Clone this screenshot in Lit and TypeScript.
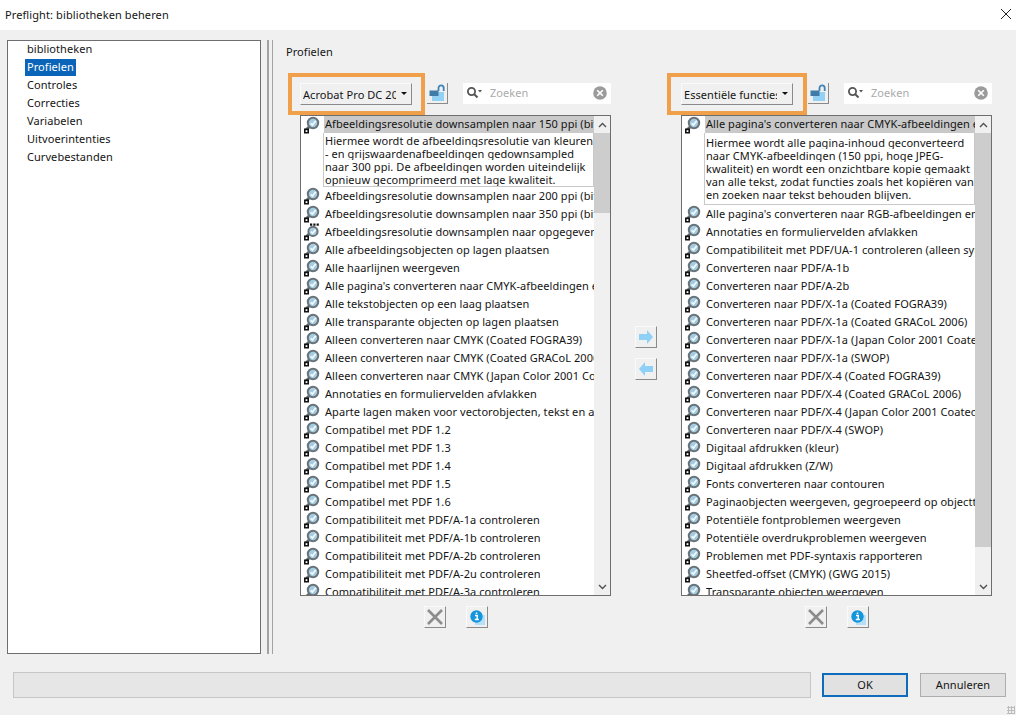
import { LitElement, html, css, svg } from "lit";
import { customElement, property } from "lit/decorators.js";

const leftRows = [
  "Afbeeldingsresolutie downsamplen naar 200 ppi (bitmap)",
  "Afbeeldingsresolutie downsamplen naar 350 ppi (bitmap)",
  "Afbeeldingsresolutie downsamplen naar opgegeven resolutie",
  "Alle afbeeldingsobjecten op lagen plaatsen",
  "Alle haarlijnen weergeven",
  "Alle pagina's converteren naar CMYK-afbeeldingen en tekst",
  "Alle tekstobjecten op een laag plaatsen",
  "Alle transparante objecten op lagen plaatsen",
  "Alleen converteren naar CMYK (Coated FOGRA39)",
  "Alleen converteren naar CMYK (Coated GRACoL 2006)",
  "Alleen converteren naar CMYK (Japan Color 2001 Coated)",
  "Annotaties en formuliervelden afvlakken",
  "Aparte lagen maken voor vectorobjecten, tekst en afbeeldingen",
  "Compatibel met PDF 1.2",
  "Compatibel met PDF 1.3",
  "Compatibel met PDF 1.4",
  "Compatibel met PDF 1.5",
  "Compatibel met PDF 1.6",
  "Compatibiliteit met PDF/A-1a controleren",
  "Compatibiliteit met PDF/A-1b controleren",
  "Compatibiliteit met PDF/A-2b controleren",
  "Compatibiliteit met PDF/A-2u controleren",
  "Compatibiliteit met PDF/A-3a controleren",
];

const rightRows = [
  "Alle pagina's converteren naar RGB-afbeeldingen en tekst",
  "Annotaties en formuliervelden afvlakken",
  "Compatibiliteit met PDF/UA-1 controleren (alleen syntaxis)",
  "Converteren naar PDF/A-1b",
  "Converteren naar PDF/A-2b",
  "Converteren naar PDF/X-1a (Coated FOGRA39)",
  "Converteren naar PDF/X-1a (Coated GRACoL 2006)",
  "Converteren naar PDF/X-1a (Japan Color 2001 Coated)",
  "Converteren naar PDF/X-1a (SWOP)",
  "Converteren naar PDF/X-4 (Coated FOGRA39)",
  "Converteren naar PDF/X-4 (Coated GRACoL 2006)",
  "Converteren naar PDF/X-4 (Japan Color 2001 Coated)",
  "Converteren naar PDF/X-4 (SWOP)",
  "Digitaal afdrukken (kleur)",
  "Digitaal afdrukken (Z/W)",
  "Fonts converteren naar contouren",
  "Paginaobjecten weergeven, gegroepeerd op objecttype",
  "Potentiële fontproblemen weergeven",
  "Potentiële overdrukproblemen weergeven",
  "Problemen met PDF-syntaxis rapporteren",
  "Sheetfed-offset (CMYK) (GWG 2015)",
  "Transparante objecten weergeven",
];

const profileIcon = (dots = false) => html`<svg class="pi" width="20" height="18" viewBox="0 0 20 18">
  <path d="M6.5 10.5 3 14" stroke="#5f686c" stroke-width="2.8" fill="none"/>
  <circle cx="10" cy="${dots ? 8.4 : 7}" r="${dots ? 4.6 : 5.2}" fill="#a4cbe1" stroke="#687277" stroke-width="2"/>
  <path d="${dots ? "M7.8 8.6 9.6 10.2 12.6 6.6" : "M7.6 7.4 9.4 9 12.8 4.8"}" stroke="#f4fafc" stroke-width="1.7" fill="none"/>
  <rect x="1" y="12.5" width="5" height="5" fill="#111"/>
  <rect x="2.6" y="14.2" width="1.8" height="1.8" fill="#fff"/>
  ${dots ? svg`<path d="M7 .6h2.2v2.2H7zM10.3 .6h2.2v2.2h-2.2zM13.6 .6h2.2v2.2h-2.2z" fill="#111"/>` : ""}
</svg>`;

const lockIcon = html`<svg width="17" height="18" viewBox="0 0 17 18">
  <rect x="3" y="8" width="12" height="9" fill="#92d0f4"/>
  <rect x="0.5" y="6.5" width="9" height="5.5" fill="#3f7ba6"/>
  <path d="M9.5 7V4a2.6 2.6 0 0 1 5.2 0V7" fill="none" stroke="#3f84b8" stroke-width="1.8"/>
</svg>`;

@customElement("list-panel")
class ListPanel extends LitElement {
  @property() picker = "";
  @property({ type: Array }) rows: string[] = [];
  @property({ type: Array }) desc: string[] = [];
  @property({ type: Number }) thumb = 80;
  @property({ type: Boolean }) roomy = false;

  static styles = css`
    :host { display: flex; flex-direction: column; width: 311px; flex: none; }
    .tools { display: flex; align-items: flex-start; height: 42px; }
    .mark { margin: 0 2px 0 -12px; width: 137px; height: 42px; box-sizing: border-box; border: 4px solid #f0a04b; padding: 6px 0 0 8px; flex: none; }
    .mark.wide { margin: 0 1px 0 -14px; width: 140px; padding-left: 10px; }
    .pick { width: 112px; height: 22px; box-sizing: border-box; display: flex; align-items: center; background: #f0f0f0; border-right: 1px solid #8a8a8a; border-bottom: 1px solid #8a8a8a; border-top: 1px solid #fafafa; border-left: 1px solid #fafafa; padding: 0 0 0 2px; }
    .pick span { width: 93px; overflow: hidden; white-space: nowrap; }
    .pick i { margin: 0 0 2px 5px; width: 0; height: 0; border-left: 3px solid transparent; border-right: 3px solid transparent; border-top: 3px solid #111; }
    .lock { margin: 10px 0 0 0; width: 21px; height: 21px; box-sizing: border-box; border-right: 1px solid #8a8a8a; border-bottom: 1px solid #8a8a8a; display: flex; align-items: center; justify-content: center; flex: none; }
    .search { margin: 10px 0 0 auto; width: 148px; height: 21px; background: #fff; display: flex; align-items: center; box-sizing: border-box; padding: 0 4px 1px 3px; }
    .search .ph { color: #ababab; margin: 0 0 2px 8px; flex: 1; }
    .list { height: 481px; box-sizing: border-box; border: 1px solid #6e6e6e; background: #fff; display: flex; }
    .body { flex: 1; min-width: 0; overflow: hidden; }
    .row { display: flex; align-items: center; height: 18px; padding-left: 2px; }
    .pi { flex: none; }
    .txt { margin-left: 2px; flex: 1; min-width: 0; white-space: nowrap; overflow: hidden; height: 18px; line-height: 17px; }
    .row.sel { height: 17px; }
    .row.sel .txt { background: #c9c9c9; margin-left: 1px; padding-left: 1px; height: 17px; line-height: 16px; }
    .desc { margin-left: 22px; border: 1px solid #c9c9c9; border-top: none; padding: 1px 0 0 1px; line-height: 13px; }
    .desc.roomy { padding: 3px 0 3px 1px; }
    .desc div { white-space: nowrap; overflow: hidden; }
    .bar { width: 16px; flex: none; background: #f0f0f0; display: flex; flex-direction: column; }
    .arr { height: 17px; flex: none; display: flex; align-items: center; justify-content: center; }
    .track { flex: 1; }
    .thumb { background: #cdcdcd; }
    .actions { display: flex; justify-content: center; gap: 20px; margin-top: 10px; }
    .tb { width: 22px; height: 22px; box-sizing: border-box; border-right: 1px solid #8a8a8a; border-bottom: 1px solid #8a8a8a; border-top: 1px solid #fafafa; border-left: 1px solid #fafafa; display: flex; align-items: center; justify-content: center; }
  `;

  render() {
    const [first, ...rest] = this.rows;
    return html`
      <div class="tools">
        <div class="mark ${this.roomy ? "wide" : ""}"><div class="pick"><span>${this.picker}</span><i></i></div></div>
        <div class="lock">${lockIcon}</div>
        <div class="search">
          <svg width="16" height="14" viewBox="0 0 16 14"><circle cx="5.5" cy="5.5" r="3.6" fill="none" stroke="#555" stroke-width="1.8"/><path d="M8 8l3.5 3.5" stroke="#555" stroke-width="2"/><path d="M12 4h4l-2 2.5z" fill="#555"/></svg>
          <span class="ph">Zoeken</span>
          <svg width="14" height="14" viewBox="0 0 14 14"><circle cx="7" cy="7" r="6.8" fill="#9b9b9b"/><path d="M4.2 4.2l5.6 5.6M9.8 4.2l-5.6 5.6" stroke="#fff" stroke-width="1.6"/></svg>
        </div>
      </div>
      <div class="list">
        <div class="body">
          <div class="row sel">${profileIcon()}<div class="txt">${first}</div></div>
          <div class="desc ${this.roomy ? "roomy" : ""}">${this.desc.map((d) => html`<div>${d}</div>`)}</div>
          ${rest.map((r) => html`<div class="row">${profileIcon(r.includes("opgegeven"))}<div class="txt">${r}</div></div>`)}
        </div>
        <div class="bar">
          <div class="arr"><svg width="9" height="6" viewBox="0 0 9 6"><path d="M1 5l3.5-3.5L8 5" fill="none" stroke="#505050" stroke-width="1.4"/></svg></div>
          <div class="thumb" style="height:${this.thumb}px"></div>
          <div class="track"></div>
          <div class="arr"><svg width="9" height="6" viewBox="0 0 9 6"><path d="M1 1l3.5 3.5L8 1" fill="none" stroke="#505050" stroke-width="1.4"/></svg></div>
        </div>
      </div>
      <div class="actions">
        <div class="tb"><svg width="18" height="18" viewBox="0 0 18 18"><path d="M2 2l14 14M16 2L2 16" stroke="#8c8c8c" stroke-width="2.6"/></svg></div>
        <div class="tb"><svg width="16" height="16" viewBox="0 0 16 16"><rect x="6" y="6" width="10" height="10" fill="#b5e0f7"/><circle cx="7.5" cy="7.5" r="6.2" fill="#1596dc"/><path d="M7.5 3.4v1.6M6 6.6h2.2v3.6M5.8 10.6h4" stroke="#fff" stroke-width="1.5" fill="none"/></svg></div>
      </div>
    `;
  }
}

@customElement("app-root")
class AppRoot extends LitElement {
  static styles = css`
    :host { display: flex; flex-direction: column; width: 1016px; height: 715px; background: #f0f0f0; font: 11px "Noto Sans", sans-serif; letter-spacing: 0.06px; color: #141414; overflow: hidden; position: relative; }
    .title { height: 30px; flex: none; background: #fff; display: flex; align-items: center; justify-content: space-between; padding: 0 4px 2px 5px; font-size: 11px; letter-spacing: 0.1px; box-sizing: border-box; }
    .main { height: 624px; box-sizing: border-box; flex: none; padding: 10px 0 0 7px; display: flex; }
    .tree { width: 254px; height: 614px; box-sizing: border-box; border: 1px solid #6e6e6e; background: #fff; flex: none; }
    .tree div { height: 18px; line-height: 16px; margin-left: 17px; padding: 0 2px; width: max-content; }
    .tree .on { background: #0a64b8; color: #fff; height: 17px; margin-bottom: 1px; }
    .split { margin-left: 6px; width: 3px; height: 614px; border-left: 2px solid #a2a2a2; border-right: 1px solid #a2a2a2; flex: none; }
    .content { padding: 3px 0 0 13px; }
    .label { height: 18px; line-height: 18px; }
    .panels { display: flex; margin: 12px 0 0 14px; }
    .mid { width: 70px; flex: none; display: flex; flex-direction: column; align-items: center; gap: 10px; padding-top: 253px; }
    .tb { width: 22px; height: 22px; box-sizing: border-box; border-right: 1px solid #8a8a8a; border-bottom: 1px solid #8a8a8a; border-top: 1px solid #fafafa; border-left: 1px solid #fafafa; display: flex; align-items: center; justify-content: center; }
    .foot { flex: 1; display: flex; align-items: center; padding: 0 10px 0 13px; gap: 11px; }
    .prog { width: 798px; height: 26px; box-sizing: border-box; background: #e6e6e6; border: 1px solid #c6c6c6; flex: none; }
    .btn { width: 86px; height: 24px; box-sizing: border-box; background: #e1e1e1; border: 1px solid #adadad; display: flex; align-items: center; justify-content: center; }
    .btn.ok { border: 2px solid #0f6cbd; margin-right: 1px; }
    .grip { position: absolute; right: 1px; bottom: 1px; width: 8px; height: 8px; background-image: radial-gradient(circle, #bbb 1px, transparent 1.2px); background-size: 3px 3px; }
  `;

  render() {
    return html`
      <div class="title">
        <span>Preflight: bibliotheken beheren</span>
        <svg width="12" height="12" viewBox="0 0 12 12"><path d="M1 1l10 10M11 1L1 11" stroke="#222" stroke-width="1"/></svg>
      </div>
      <div class="main">
        <div class="tree">
          <div>bibliotheken</div>
          <div class="on">Profielen</div>
          <div>Controles</div>
          <div>Correcties</div>
          <div>Variabelen</div>
          <div>Uitvoerintenties</div>
          <div>Curvebestanden</div>
        </div>
        <div class="split"></div>
        <div class="content">
          <div class="label">Profielen</div>
          <div class="panels">
            <list-panel picker="Acrobat Pro DC 2017" .thumb=${80}
              .rows=${["Afbeeldingsresolutie downsamplen naar 150 ppi (bitmap)", ...leftRows]}
              .desc=${["Hiermee wordt de afbeeldingsresolutie van kleuren", "- en grijswaardenafbeeldingen gedownsampled", "naar 300 ppi. De afbeeldingen worden uiteindelijk", "opnieuw gecomprimeerd met lage kwaliteit."]}></list-panel>
            <div class="mid">
              <div class="tb"><svg width="16" height="14" viewBox="0 0 16 14"><path d="M1 4h8V0l6 7-6 7v-4H1z" fill="#8fd0f7"/></svg></div>
              <div class="tb"><svg width="16" height="14" viewBox="0 0 16 14"><path d="M15 4H7V0L1 7l6 7v-4h8z" fill="#8fd0f7"/></svg></div>
            </div>
            <list-panel picker="Essentiële functies" .thumb=${414} roomy
              .rows=${["Alle pagina's converteren naar CMYK-afbeeldingen en tekst", ...rightRows]}
              .desc=${["Hiermee wordt alle pagina-inhoud geconverteerd", "naar CMYK-afbeeldingen (150 ppi, hoge JPEG-", "kwaliteit) en wordt een onzichtbare kopie gemaakt", "van alle tekst, zodat functies zoals het kopiëren van", "en zoeken naar tekst behouden blijven."]}></list-panel>
          </div>
        </div>
      </div>
      <div class="foot">
        <div class="prog"></div>
        <div class="btn ok">OK</div>
        <div class="btn">Annuleren</div>
      </div>
      <div class="grip"></div>
    `;
  }
}
